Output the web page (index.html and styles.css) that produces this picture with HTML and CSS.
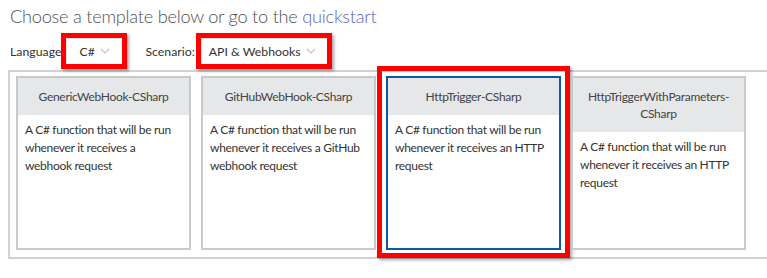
FILE: index.html
```html
<!DOCTYPE html>
<html lang="en">
<head>
  <meta charset="UTF-8" />
  <title>Choose a template</title>
  <link rel="stylesheet" href="styles.css">
</head>
<body>
  <h1 class="title">Choose a template below or go to the <a href="#">quickstart</a></h1>

  <div class="filters">
    <span class="label">Language</span>
    <div class="select mark lang">
      <span>C#</span>
      <svg class="chev" width="10" height="6" viewBox="0 0 10 6"><path d="M1 1 L5 5 L9 1" fill="none" stroke="#c4c4c4" stroke-width="1.2"/></svg>
    </div>
    <span class="label scen">Scenario:</span>
    <div class="select mark scenario">
      <span>API &amp; Webhooks</span>
      <svg class="chev" width="10" height="6" viewBox="0 0 10 6"><path d="M1 1 L5 5 L9 1" fill="none" stroke="#c4c4c4" stroke-width="1.2"/></svg>
    </div>
  </div>

  <div class="templates">
    <div class="card">
      <div class="card-head">GenericWebHook-CSharp</div>
      <div class="card-body">A C# function that will be run whenever it receives a webhook request</div>
    </div>
    <div class="card">
      <div class="card-head">GitHubWebHook-CSharp</div>
      <div class="card-body">A C# function that will be run whenever it receives a GitHub webhook request</div>
    </div>
    <div class="card selected">
      <div class="card-head">HttpTrigger-CSharp</div>
      <div class="card-body">A C# function that will be run whenever it receives an HTTP request</div>
      <div class="highlight"></div>
    </div>
    <div class="card">
      <div class="card-head">HttpTriggerWithParameters-CSharp</div>
      <div class="card-body">A C# function that will be run whenever it receives an HTTP request</div>
    </div>
  </div>
</body>
</html>
```

FILE: styles.css
```css
:root {
  --text: #444;
  --body-text: #333;
  --link: #5b5fc2;
  --line: #d2d2d2;
  --card-border: #c8c9cb;
  --head-bg: #e6e7e9;
  --blue: #0b5aa6;
  --red: #ff0000;
}
* { box-sizing: border-box; }
body {
  margin: 0; padding: 0;
  width: 767px; height: 278px; overflow: hidden;
  background: #fff; color: var(--text);
  font-family: 'Lato', 'Noto Sans', sans-serif;
}
.title {
  margin: 0; padding: 2px 0 0 10px;
  font-size: 18.2px; font-weight: 300; line-height: 28px;
  letter-spacing: -0.25px;
  color: #505050;
}
.title a { color: var(--link); text-decoration: none; }

.filters {
  display: flex; align-items: center;
  margin-top: 2px; padding-left: 10px; height: 38px;
  font-size: 12.3px;
}
.label { color: #333; margin-right: 0; }
.label.scen { margin-left: 18px; margin-right: 1px; }
.select {
  display: flex; align-items: center; justify-content: space-between;
  height: 36px; font-size: 12.3px; color: #333;
  background: #fff; white-space: nowrap;
}
.select.lang { width: 66px; padding: 0 12px 0 13px; }
.select.scenario { width: 136px; padding: 0 11px 0 8px; }
.mark {
  border: 5px solid var(--red);
  box-shadow: 2px 2px 3px rgba(0,0,0,0.35), inset 1px 1px 0 #e4e4e4;
}

.templates {
  margin: 0 0 0 8px; width: 780px; height: 189px;
  border: 2px solid var(--line); border-right: none;
  padding: 4px 0 0 6px;
  display: grid; grid-template-columns: repeat(4, 175px); gap: 10px;
}
.card {
  position: relative;
  height: 174px;
  border: 2px solid var(--card-border);
  background: #fff;
}
.card-head {
  background: var(--head-bg);
  text-align: center;
  padding: 10px 14px 10px;
  font-size: 12px; line-height: 17px; letter-spacing: -0.3px; color: #444;
}
.card-body {
  padding: 6px 6px 0 7px;
  font-size: 12px; line-height: 18px; letter-spacing: -0.3px; color: var(--body-text);
}
.card.selected { border-color: var(--blue); }
.highlight {
  position: absolute; top: -12px; left: -11px; right: -11px; bottom: -10px;
  border: 5px solid var(--red);
  box-shadow: 2px 2px 3px rgba(0,0,0,0.35);
  pointer-events: none;
}
```
